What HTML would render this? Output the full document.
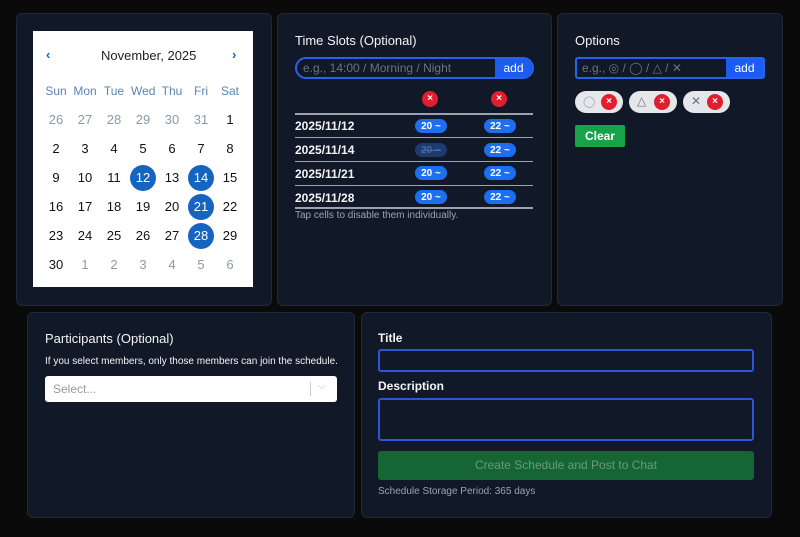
<!DOCTYPE html>
<html><head><meta charset="utf-8"><style>
*{box-sizing:border-box;margin:0;padding:0}
body{width:800px;height:537px;background:#0a0a0a;font-family:"Liberation Sans","DejaVu Sans",sans-serif;color:#e5e7eb;position:relative;overflow:hidden}
.card{position:absolute;background:#111827;border:1px solid #1f2937;border-radius:6px}
.t{position:absolute;white-space:nowrap}
.cal{position:absolute;left:33px;top:31px;width:220px;height:256px;background:#fff}
.c{position:absolute;width:24px;height:24px;line-height:24px;text-align:center;font-size:13px;color:#111;margin-left:-12px;margin-top:-12px}
.g{color:#8a9aa8}
.dn{color:#5a85b5;font-size:12px}
.sel{background:#1565c0;color:#fff;border-radius:50%;width:26px;height:26px;line-height:26px;margin-left:-13px;margin-top:-13px}
.pill{position:absolute;width:32px;height:14px;border-radius:7px;background:#1d6ff0;color:#fff;font-size:10px;font-weight:bold;text-align:center;line-height:15px;margin-left:-16px;margin-top:-7px}
.x{position:absolute;width:16px;height:16px;border-radius:50%;background:#e11d2e;color:#fff;font-size:10px;font-weight:bold;text-align:center;line-height:16px;margin-left:-8px;margin-top:-8px}
.hr{position:absolute;left:295px;width:238px;height:2px;background:#9ca3af}
.row{position:absolute;left:295px;font-size:12px;font-weight:bold;color:#f3f4f6}
.chip{position:absolute;top:91px;height:22px;border-radius:11px;background:#e5e7eb}
</style></head><body>
<div class="card" style="left:16px;top:13px;width:256px;height:293px"></div>
<div class="card" style="left:277px;top:13px;width:275px;height:293px"></div>
<div class="card" style="left:557px;top:13px;width:226px;height:293px"></div>
<div class="card" style="left:27px;top:312px;width:328px;height:206px"></div>
<div class="card" style="left:361px;top:312px;width:411px;height:206px"></div>

<div class="cal"></div>
<div class="t" style="left:46px;top:47px;color:#1565c0;font-size:13px;font-weight:bold">‹</div>
<div class="t" style="left:232px;top:47px;color:#1565c0;font-size:13px;font-weight:bold">›</div>
<div class="t" style="left:101px;top:48px;font-size:13px;color:#222">November, 2025</div>
<div id="cal"></div>

<div class="t" style="left:295px;top:33px;font-size:13px;color:#f3f4f6">Time Slots (Optional)</div>
<div style="position:absolute;left:295px;top:57px;width:239px;height:22px;border:2px solid #2563eb;border-radius:11px;background:#111827;overflow:hidden">
<div class="t" style="left:6px;top:2px;font-size:12px;color:#6b7280">e.g., 14:00 / Morning / Night</div>
<div style="position:absolute;right:0;top:0;width:37px;height:18px;background:#1d5cf0;color:#fff;font-size:12px;text-align:center;line-height:18px">add</div></div>
<div class="x" style="left:430px;top:99px">×</div><div class="x" style="left:499px;top:99px">×</div>
<div class="hr" style="top:113px"></div><div class="hr" style="top:137px;height:1px"></div><div class="hr" style="top:161px;height:1px"></div><div class="hr" style="top:185px;height:1px"></div><div class="hr" style="top:207px"></div>
<div class="row" style="top:119px">2025/11/12</div><div class="row" style="top:143px">2025/11/14</div><div class="row" style="top:167px">2025/11/21</div><div class="row" style="top:191px">2025/11/28</div>
<div class="pill" style="left:431px;top:126px">20 ~</div><div class="pill" style="left:500px;top:126px">22 ~</div>
<div class="pill" style="left:431px;top:150px;background:#1e3a6e;color:#4a6a9a;text-decoration:line-through">20 ~</div><div class="pill" style="left:500px;top:150px">22 ~</div>
<div class="pill" style="left:431px;top:173px">20 ~</div><div class="pill" style="left:500px;top:173px">22 ~</div>
<div class="pill" style="left:431px;top:197px">20 ~</div><div class="pill" style="left:500px;top:197px">22 ~</div>
<div class="t" style="left:295px;top:210px;font-size:10px;color:#9ca3af">Tap cells to disable them individually.</div>

<div class="t" style="left:575px;top:33px;font-size:13px;color:#f3f4f6">Options</div>
<div style="position:absolute;left:575px;top:57px;width:190px;height:22px;border:2px solid #2563eb;border-radius:3px;background:#111827;overflow:hidden">
<div class="t" style="left:5px;top:2px;font-size:12px;color:#6b7280">e.g., ◎ / ◯ / △ / ✕</div>
<div style="position:absolute;right:0;top:0;width:37px;height:18px;background:#1d5cf0;color:#fff;font-size:12px;text-align:center;line-height:18px">add</div></div>
<div class="chip" style="left:575px;width:48px"><span class="t" style="left:8px;top:4px;font-size:11px;color:#9ca3af">◯</span></div>
<div class="chip" style="left:629px;width:48px"><span class="t" style="left:8px;top:3px;font-size:12px;color:#6b7280">△</span></div>
<div class="chip" style="left:683px;width:47px"><span class="t" style="left:8px;top:3px;font-size:12px;color:#6b7280">✕</span></div>
<div class="x" style="left:609px;top:102px">×</div><div class="x" style="left:662px;top:102px">×</div><div class="x" style="left:715px;top:102px">×</div>
<div style="position:absolute;left:575px;top:125px;width:50px;height:22px;background:#16a34a;border-radius:2px;color:#fff;font-size:12px;font-weight:bold;text-align:center;line-height:22px">Clear</div>

<div class="t" style="left:45px;top:331px;font-size:13px;color:#f3f4f6">Participants (Optional)</div>
<div class="t" style="left:45px;top:356px;font-size:10px;color:#f3f4f6">If you select members, only those members can join the schedule.</div>
<div style="position:absolute;left:45px;top:376px;width:292px;height:26px;background:#fff;border-radius:3px">
<div class="t" style="left:8px;top:6px;font-size:12px;color:#999">Select...</div>
<div style="position:absolute;left:265px;top:6px;width:1px;height:14px;background:#ccc"></div>
<div class="t" style="left:273px;top:5px;font-size:10px;color:#bbb">⌵</div></div>

<div class="t" style="left:378px;top:331px;font-size:12px;font-weight:bold;color:#f3f4f6">Title</div>
<div style="position:absolute;left:378px;top:349px;width:376px;height:23px;border:2px solid #2f55d4;border-radius:3px"></div>
<div class="t" style="left:378px;top:379px;font-size:12px;font-weight:bold;color:#f3f4f6">Description</div>
<div style="position:absolute;left:378px;top:398px;width:376px;height:43px;border:2px solid #2f55d4;border-radius:3px"></div>
<div style="position:absolute;left:378px;top:451px;width:376px;height:29px;background:#166534;border-radius:3px;color:#6b9a7a;font-size:12px;text-align:center;line-height:29px">Create Schedule and Post to Chat</div>
<div class="t" style="left:378px;top:486px;font-size:10px;color:#9ca3af">Schedule Storage Period: 365 days</div>

<script>
var d=["Sun","Mon","Tue","Wed","Thu","Fri","Sat"],h="",x0=56,dx=29;
d.forEach(function(n,i){h+='<div class="c dn" style="left:'+(x0+i*dx)+'px;top:91px">'+n+'</div>'});
var days=[26,27,28,29,30,31];for(var i=1;i<=30;i++)days.push(i);for(i=1;i<=6;i++)days.push(i);
days.forEach(function(v,k){var r=Math.floor(k/7),c=k%7,cls="c";
if(k<6||k>35)cls+=" g";if(k>5&&k<36&&[12,14,21,28].indexOf(v)>=0)cls+=" sel";
h+='<div class="'+cls+'" style="left:'+(x0+c*dx)+'px;top:'+(120+r*29)+'px">'+v+'</div>'});
document.getElementById("cal").innerHTML=h;
</script>
</body></html>
